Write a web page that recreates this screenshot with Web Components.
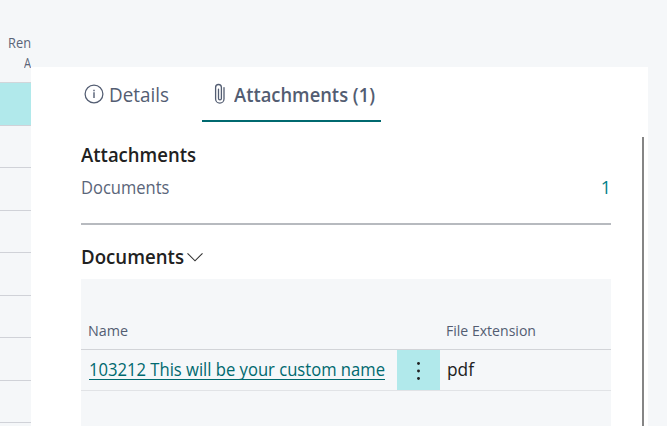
<!DOCTYPE html>
<html lang="en"><head><meta charset="utf-8"><title>Attachments</title>
<style>html,body{margin:0;height:100%;overflow:hidden;background:#f5f7f9}body{font-family:"Open Sans","Noto Sans",sans-serif}</style></head>
<body><app-page></app-page>
<script>
const define=(name,html,ready)=>customElements.define(name,class extends HTMLElement{
  connectedCallback(){
    if(this.shadowRoot)return;
    this.attachShadow({mode:'open'}).innerHTML=html;
    if(ready)ready(this);
  }
});

/* Single-line label, condensed horizontally so the run takes the given width. */
define('fit-text',`<style>:host{display:block;white-space:nowrap;flex:none}span{display:inline-block;transform-origin:0 50%}</style><span><slot></slot></span>`,el=>{
  const s=el.shadowRoot.querySelector('span'),w=+el.getAttribute('w');
  if(!w)return;
  const natural=s.getBoundingClientRect().width;
  s.style.transform='scaleX('+w/natural+')';
  s.style.marginRight=(w-natural)+'px';
});

define('info-icon',`<style>:host{display:block;width:20px;height:20px}svg{display:block}</style>
<svg width="20" height="20" fill="none" stroke="#535d72"><circle cx="10" cy="10" r="8.9" stroke-width="1.25"/><path d="M10 8.3V14" stroke-width="1.4"/><path d="M10 5.8V7.2" stroke-width="1.4"/></svg>`);
define('clip-icon',`<style>:host{display:block;width:12px;height:22px}svg{display:block}</style>
<svg width="12" height="22" fill="none" stroke="#535d72" stroke-width="1.3" stroke-linecap="round"><path d="M10 4.6V15.9A4.2 4.2 0 0 1 1.6 15.9V4.4A2.9 2.9 0 0 1 7.4 4.4V15.4A1.45 1.45 0 0 1 4.5 15.4V6.2"/></svg>`);
define('chevron-icon',`<style>:host{display:block;width:16px;height:10px}svg{display:block}</style>
<svg width="16" height="10" fill="none" stroke="#333" stroke-width="1.1"><path d="M.5 1.3L8 8.8L15.5 1.3"/></svg>`);
define('more-icon',`<style>:host{display:block;width:3px;height:18px}svg{display:block}</style>
<svg width="3" height="18" fill="#212121"><circle cx="1.5" cy="1.5" r="1.45"/><circle cx="1.5" cy="9" r="1.45"/><circle cx="1.5" cy="16.5" r="1.45"/></svg>`);

define('back-list',`<style>
:host{display:block;width:31px;height:426px;overflow:hidden;color:#5a6478;font-size:14.5px;line-height:20px}
.head{height:49px;padding:33px 0 0 8px}.head fit-text+fit-text{padding-left:16px}
.rows{display:grid;grid-template-rows:43px 42px 43px 42px 43px 42px 43px 42px 4px;border-top:1px solid #d2d6da}
.rows div{border-bottom:1px solid #d0d2d8;box-sizing:border-box}.rows .sel{background:#b1e9eb}
</style><div class="head"><fit-text w="23">Ren</fit-text><fit-text w="7">A</fit-text></div>
<div class="rows"><div class="sel"></div><div></div><div></div><div></div><div></div><div></div><div></div><div></div></div>`);

define('tab-item',`<style>
:host{display:flex;box-sizing:border-box;height:55px;padding-top:15px;font-size:19.5px;line-height:25px;color:#535d72;border-bottom:2px solid transparent}
:host([selected]){border-color:#00696f;font-weight:600}
</style><slot></slot>`);

define('field-row',`<style>:host{display:flex;justify-content:space-between;font-size:18px;line-height:26px;color:#5a6579}.v{color:#008089}</style><slot></slot><span class="v"><slot name="value"></slot></span>`);
define('section-title',`<style>:host{display:flex;align-items:center;gap:3px;font-weight:600;font-size:19px;line-height:26px;color:#212121}</style><slot></slot>`);

define('doc-table',`<style>
:host{display:block;background:#f5f7f9;height:147px;width:530px}
.head,.row{display:grid;grid-template-columns:316px 43px 1fr;box-sizing:border-box}
.head{height:71px;padding-top:42px;font-size:14.5px;line-height:20px;color:#535d72;border-bottom:1px solid #d2d4d8}
.head fit-text{padding-left:7px}.head .ext{grid-column:3;padding-left:6px}
.row{height:41px;border-bottom:1px solid #e1e3e6;font-size:18px;line-height:24px}
a{display:block;width:296px;height:21px;margin:8px 0 0 8px;line-height:22px;border-bottom:1px solid #00696f;color:#00696f;text-decoration:none}
.more{display:flex;align-items:center;justify-content:center;padding-top:2px;background:#b1e9eb}
.pdf{padding:7px 0 0 7px;color:#212121}
</style><div class="head"><fit-text w="40">Name</fit-text><fit-text class="ext" w="90">File Extension</fit-text></div>
<div class="row"><a><fit-text w="296">103212 This will be your custom name</fit-text></a><div class="more"><more-icon></more-icon></div><fit-text class="pdf" w="27">pdf</fit-text></div>`);

define('fact-pane',`<style>
:host{display:grid;grid-template-columns:1fr 7px;width:617px;height:359px;margin-top:67px;background:#fff}
.content{padding-left:50px}
.tabs{display:flex}
.details{width:121px;padding-left:3px;gap:5px}.att{width:179px;padding-left:12px;gap:8px}
info-icon{margin-top:2px}clip-icon{margin-top:1px}
.group{width:530px;height:81px;padding-top:20px;border-bottom:2px solid #b7babf}
.group field-row{margin-top:6px}
.docs{margin-top:19px;margin-bottom:9px}
.bar{width:2px;height:289px;margin-top:70px;margin-left:1px;background:#858585}
</style><div class="content">
<div class="tabs"><tab-item class="details"><info-icon></info-icon><fit-text w="60">Details</fit-text></tab-item><tab-item class="att" selected><clip-icon></clip-icon><fit-text w="141">Attachments (1)</fit-text></tab-item></div>
<div class="group"><section-title><fit-text w="115">Attachments</fit-text></section-title><field-row><fit-text w="88.5">Documents</fit-text><span slot="value">1</span></field-row></div>
<section-title class="docs"><fit-text w="103">Documents</fit-text><chevron-icon></chevron-icon></section-title>
<doc-table></doc-table></div><div class="bar"></div>`);

define('app-page',`<style>:host{display:flex;width:667px;height:426px;overflow:hidden;background:#f5f7f9}</style><back-list></back-list><fact-pane></fact-pane>`);
</script></body></html>
